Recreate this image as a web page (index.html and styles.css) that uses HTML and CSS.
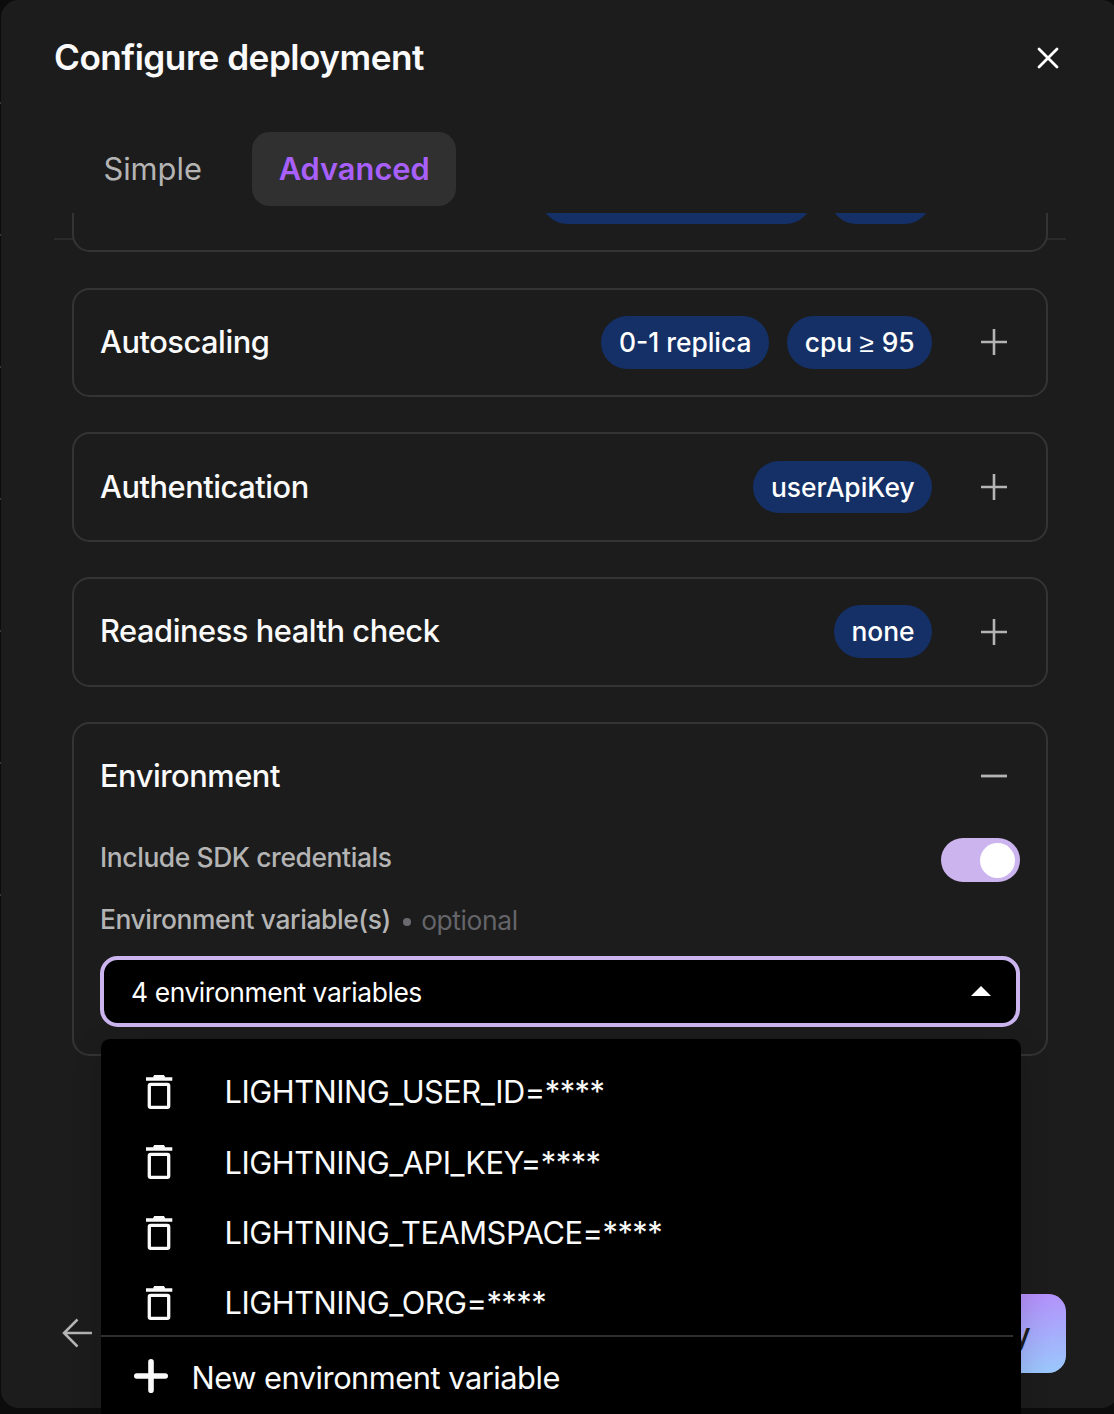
FILE: index.html
```html
<!DOCTYPE html>
<html lang="en">
<head>
<meta charset="utf-8">
<title>Configure deployment</title>
<link rel="stylesheet" href="styles.css">
</head>
<body>
<svg class="sprite" aria-hidden="true">
  <symbol id="plus" viewBox="0 0 26 26"><path d="M0 13H26M13 0V26" stroke="currentColor" stroke-width="2.6"/></symbol>
  <symbol id="minus" viewBox="0 0 26 26"><path d="M0 13H26" stroke="currentColor" stroke-width="2.8"/></symbol>
  <symbol id="trash" viewBox="0 0 28 36"><path d="M1 3.3H8.3V2.4L9.3 1H18.9L19.9 2.4V3.3H27.3V6.8H1Z" fill="currentColor"/><rect x="4.3" y="10.3" width="19.4" height="23" rx="1.4" fill="none" stroke="currentColor" stroke-width="3.3"/></symbol>
</svg>
<div class="page-edge"></div>
<main class="modal">
  <header class="header">
    <h1 class="title">Configure deployment</h1>
    <button class="close" aria-label="Close"><svg width="22" height="22" viewBox="0 0 22 22"><path d="M2 2L20 20M20 2L2 20" stroke="currentColor" stroke-width="2.8" stroke-linecap="round"/></svg></button>
  </header>
  <nav class="tabs">
    <button class="tab">Simple</button>
    <button class="tab active">Advanced</button>
  </nav>
  <div class="scroller">
    <div class="list">
      <section class="card"><div class="row"><span class="chip chip-wide"></span><span class="chip chip-short"></span><span class="toggle-icon"></span></div></section>
      <section class="card"><div class="row"><h2 class="name">Autoscaling</h2><span class="chip">0-1 replica</span><span class="chip">cpu <span class="operator">≥</span> 95</span><svg class="toggle-icon"><use href="#plus"/></svg></div></section>
      <section class="card"><div class="row"><h2 class="name">Authentication</h2><span class="chip">userApiKey</span><svg class="toggle-icon"><use href="#plus"/></svg></div></section>
      <section class="card"><div class="row"><h2 class="name">Readiness health check</h2><span class="chip">none</span><svg class="toggle-icon"><use href="#plus"/></svg></div></section>
      <section class="card open">
        <div class="row"><h2 class="name">Environment</h2><svg class="toggle-icon"><use href="#minus"/></svg></div>
        <div class="setting"><span class="label">Include SDK credentials</span><span class="switch"><span class="knob"></span></span></div>
        <div class="field-label"><span class="label">Environment variable(s)</span><span class="dot"></span><span class="optional">optional</span></div>
        <div class="select"><span>4 environment variables</span><svg width="20" height="10" viewBox="0 0 20 10"><path d="M0 10L10 0L20 10Z" fill="#fff"/></svg></div>
      </section>
    </div>
  </div>
  <footer class="footer">
    <svg class="back" width="30" height="30" viewBox="0 0 30 30"><path d="M30 15H2M15.5 1.5L2 15L15.5 28.5" fill="none" stroke="currentColor" stroke-width="2.5"/></svg>
    <button class="deploy">Deploy</button>
  </footer>
</main>
<div class="menu">
  <div class="item"><svg class="trash"><use href="#trash"/></svg><span>LIGHTNING_USER_ID=****</span></div>
  <div class="item"><svg class="trash"><use href="#trash"/></svg><span>LIGHTNING_API_KEY=****</span></div>
  <div class="item"><svg class="trash"><use href="#trash"/></svg><span>LIGHTNING_TEAMSPACE=****</span></div>
  <div class="item"><svg class="trash"><use href="#trash"/></svg><span>LIGHTNING_ORG=****</span></div>
  <div class="new"><svg width="34" height="34" viewBox="0 0 34 34"><path d="M2.8 17H31.2M17 2.8V31.2" stroke="currentColor" stroke-width="5.6" stroke-linecap="round"/></svg><span>New environment variable</span></div>
</div>
</body>
</html>
```
FILE: styles.css
```css
* { box-sizing: border-box; }
body {
  margin: 0;
  position: relative;
  height: 1414px;
  overflow: hidden;
  padding-left: 1px;
  background: #0c0c0c;
  color: #fafafa;
  font-family: Inter, "Liberation Sans", sans-serif;
}
button { border: 0; padding: 0; background: none; color: inherit; font: inherit; }
h1, h2 { margin: 0; }
.sprite { position: absolute; width: 0; height: 0; }
/* Row borders of the page behind the dialog */
.page-edge {
  position: absolute;
  top: 102px;
  left: 0;
  width: 1px;
  height: 796px;
  background: linear-gradient(#3a3a3a 0 2px, transparent 2px) 0 0 / 1px 132px;
}
.modal {
  position: relative;
  display: flex;
  flex-direction: column;
  width: 1118px;
  height: 1408px;
  padding: 0 53px 35px;
  border-radius: 17.6px;
  background: #1c1c1c;
}
.header {
  display: flex;
  align-items: center;
  justify-content: space-between;
  height: 132px;
  padding: 0 6.6px 17px 0;
}
.title { padding-bottom: 2px; font-size: 35.2px; font-weight: 600; line-height: 44px; letter-spacing: -0.0148em; }
.close { display: flex; color: #fff; }
.tabs {
  display: flex;
  flex: none;
  gap: 24px;
  height: 108px;
  padding-left: 23px;
  border-bottom: 2px solid #2a2a2a;
}
.tab { height: 74px; padding: 0 26.4px 2px; border-radius: 17.6px; color: #b4b4b4; font-size: 30.8px; }
.tab.active { background: #303030; color: #a960fa; font-weight: 600; }
.scroller {
  position: relative;
  flex: 1;
  min-height: 0;
  margin-top: -27px;
  padding: 0 18px;
  overflow: hidden;
}
.list { display: flex; flex-direction: column; gap: 35.2px; margin-top: -70.2px; }
.card { flex: none; height: 109.6px; padding: 0 26px; border: 2px solid #343434; border-radius: 17.6px; background: #1c1c1c; }
.card.open { height: 334px; }
.row { display: flex; align-items: center; justify-content: flex-end; gap: 17.6px; height: 105.2px; }
.open .row { height: 104px; }
.name { margin-right: auto; padding-bottom: 1.6px; font-size: 30.8px; font-weight: 500; letter-spacing: -0.0148em; }
.chip { height: 52.8px; padding: 0 17.8px; border-radius: 26.4px; background: #143066; color: #fff; font-size: 26.4px; font-weight: 500; line-height: 53.2px; white-space: nowrap; }
.operator { margin-right: 1px; font-family: "Liberation Sans", sans-serif; font-weight: 400; line-height: 1; }
.chip-wide { width: 271px; }
.chip-short { width: 101px; }
.chip-short + .toggle-icon { margin-left: 32.6px; }
.toggle-icon { width: 26px; height: 26px; margin: 0 13px 0 31px; color: #b4b4b4; }
.setting { display: flex; align-items: center; justify-content: space-between; height: 64px; }
.setting .label { padding-bottom: 5px; }
.label { color: #b4b4b4; font-size: 26.4px; font-weight: 500; letter-spacing: -0.0148em; }
.switch { display: flex; justify-content: flex-end; width: 79px; height: 44px; padding: 5px; border-radius: 22px; background: #ccb5ef; }
.knob { width: 35px; height: 35px; border-radius: 50%; background: #fff; }
.field-label { display: flex; align-items: center; height: 64px; padding-bottom: 9px; }
.dot { width: 8px; height: 8px; margin: 6px 10px 0 12.3px; border-radius: 50%; background: #6a6a70; }
.optional { padding-top: 2px; color: #646469; font-size: 26.4px; letter-spacing: -0.0148em; }
.select { display: flex; align-items: center; justify-content: space-between; height: 71px; padding: 0 25px 0 27px; border: 4px solid #ccb5ef; border-radius: 17.6px; background: #000; color: #fff; font-size: 26.4px; letter-spacing: -0.0155em; }
.select span { padding-top: 1px; }
.footer { display: flex; align-items: center; justify-content: space-between; height: 79px; padding-left: 8px; }
.back { margin-bottom: 1px; color: #b4b4b4; }
.deploy { height: 79px; padding: 0 35.2px; border-radius: 17.6px; background: linear-gradient(170deg, #b787fa 12%, #9bc6fc 95%); color: #1c1c1c; font-size: 30.8px; font-weight: 500; }
.menu {
  position: absolute;
  top: 1039px;
  left: 101px;
  width: 920px;
  height: 400px;
  padding-top: 18px;
  border-radius: 8.8px;
  background: #000;
  font-size: 30.8px;
  letter-spacing: -0.0158em;
  box-shadow: 0 8px 30px rgba(0, 0, 0, .15);
}
.item { display: flex; align-items: center; gap: 51.6px; height: 70.3px; padding-left: 44px; }
.item span { padding-bottom: .6px; }
.trash { width: 28px; height: 36px; }
.new { display: flex; align-items: center; gap: 23.5px; width: 912px; height: 82px; margin-top: -3px; padding-left: 33px; border-top: 2px solid #2e2e2e; }
.new svg { margin-bottom: 2px; }
```
